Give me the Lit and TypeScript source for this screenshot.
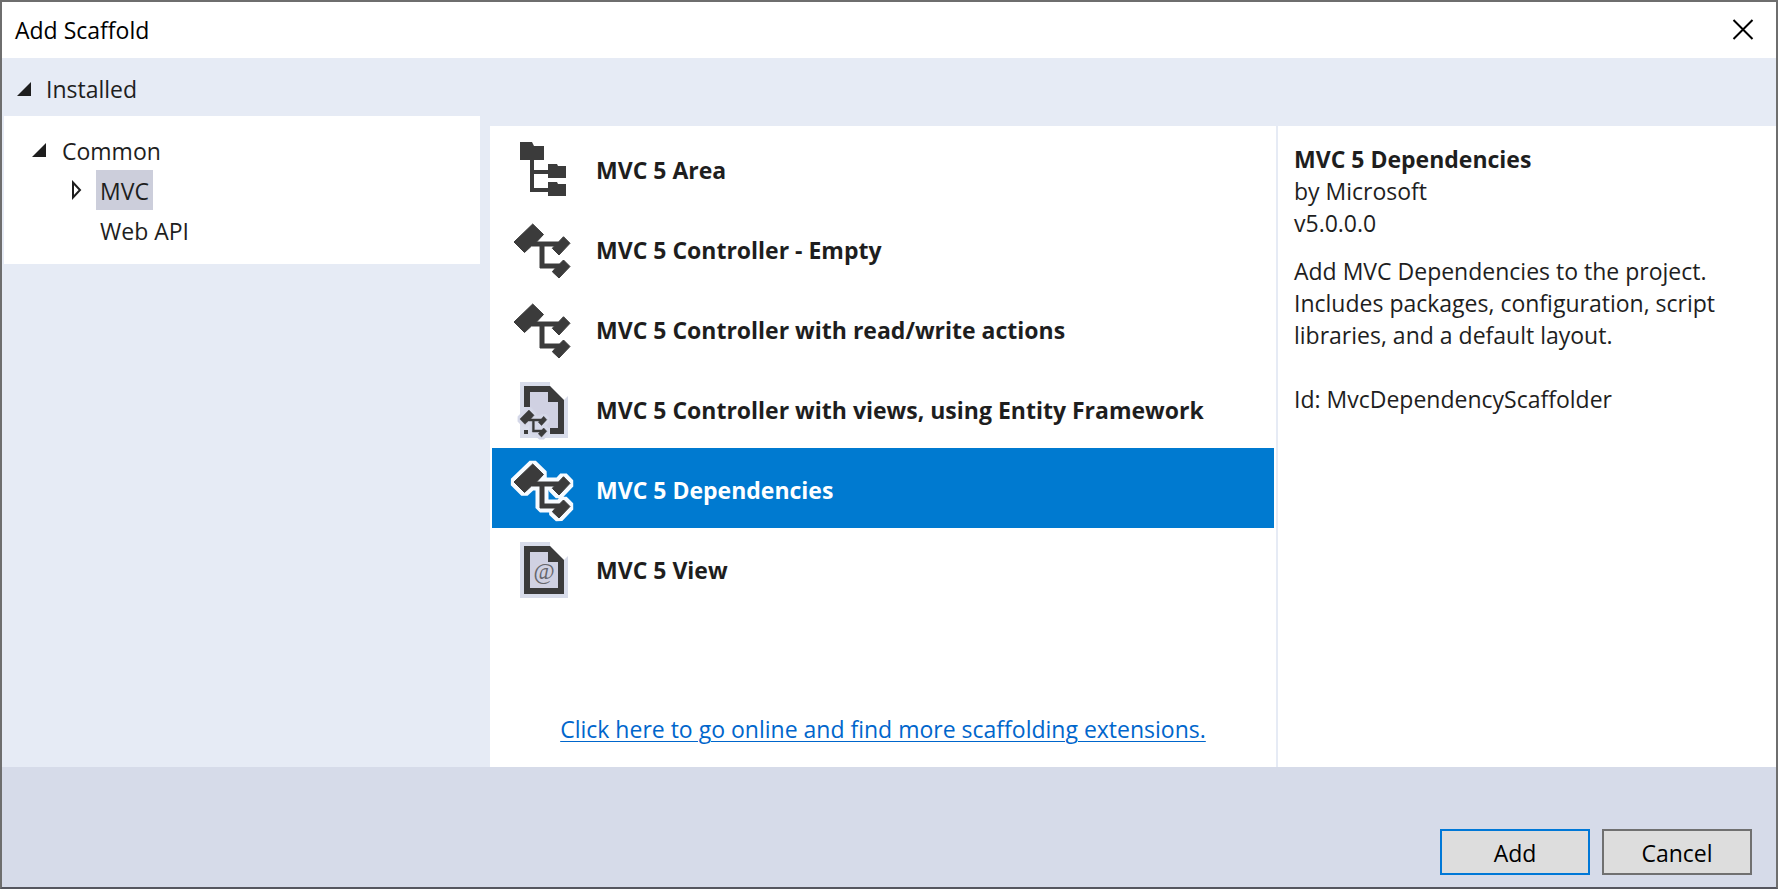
import { LitElement, html, css, svg, nothing } from "lit";
import { customElement, state } from "lit/decorators.js";
import { classMap } from "lit/directives/class-map.js";

type IconName = "area" | "controller" | "entity" | "view";

interface Scaffold {
  name: string;
  icon: IconName;
}

const scaffolds: Scaffold[] = [
  { name: "MVC 5 Area", icon: "area" },
  { name: "MVC 5 Controller - Empty", icon: "controller" },
  { name: "MVC 5 Controller with read/write actions", icon: "controller" },
  { name: "MVC 5 Controller with views, using Entity Framework", icon: "entity" },
  { name: "MVC 5 Dependencies", icon: "controller" },
  { name: "MVC 5 View", icon: "view" },
];

const controllerPath =
  "M4 26L22.7 8L33.5 18.5L26.5 26H48.5L53.5 20.7L60 27.3L49 39L42.3 32.3L44.5 30H34V48H49.5L53.5 44L60 50.5L49 62L42.3 55.7L45.5 52H30V30H21.5L14.5 36.5Z";
const sheetPath = "M10 6H40V10L54 24L58 20V62H10Z";

@customElement("scaffold-icon")
export class ScaffoldIcon extends LitElement {
  static properties = { name: { type: String }, halo: { type: Boolean } };
  declare name: IconName;
  declare halo: boolean;

  static styles = css`
    :host { display: block; width: 64px; height: 64px; }
    svg { display: block; width: 64px; height: 64px; overflow: visible; }
    .ink { fill: #3b3b3b; }
    .bold { stroke: #3b3b3b; stroke-width: 1; }
    .halo { fill: #f7fbff; stroke: #f7fbff; stroke-width: 9; stroke-linejoin: bevel; }
    .sheet { fill: #d8dcea; }
    .paper { fill: #d0d1e2; }
    .soft { fill: #d5d8e8; stroke: #d5d8e8; stroke-width: 14; stroke-linejoin: bevel; }
    .at { fill: #66666c; font: 23px "Liberation Serif", serif; text-anchor: middle; }
  `;

  private shape() {
    switch (this.name) {
      case "area":
        return svg`<path class="ink" d="M10 6H22L24 10H34V24H24V34H38V28H47L48 30H56V42H38V38H24V52H38V46H47L48 48H56V60H38V56H20V24H10Z"/>`;
      case "entity":
        return svg`
          <path class="sheet" d=${sheetPath}/>
          <path class="paper" d="M20 16H38V26H48V52H20Z"/>
          <path class="ink" d="M14 10H40L54 24V58H40V52H48V26H38V16H20V31H14Z"/>
          <g transform="translate(8 30) scale(0.48 0.5)">
            <path class="soft" d=${controllerPath}/>
            <path class="ink bold" d=${controllerPath}/>
          </g>
          <path class="ink" d="M14 54H18V58H14ZM40 52H48V58H40Z"/>`;
      case "view":
        return svg`
          <path class="sheet" d=${sheetPath}/>
          <path class="paper" d="M20 16H38V26H48V52H20Z"/>
          <path class="ink" fill-rule="evenodd" d="M14 10H40L54 24V58H14ZM20 16V52H48V26H38V16Z"/>
          <text class="at" x="34" y="43">@</text>`;
      default:
        return svg`
          ${this.halo ? svg`<path class="halo" d=${controllerPath}/>` : nothing}
          <path class="ink bold" d=${controllerPath}/>`;
    }
  }

  render() {
    return html`<svg viewBox="0 0 64 64" aria-hidden="true">${this.shape()}</svg>`;
  }
}

@customElement("app-root")
export class AppRoot extends LitElement {
  @state() private selected = 4;

  static styles = css`
    :host {
      display: block;
      font: 23px/32px "Segoe UI", "Open Sans", "Noto Sans", sans-serif;
      color: #1e1e1e;
    }
    * { box-sizing: border-box; }
    button { font: inherit; color: inherit; background: none; border: 0; padding: 0; text-align: left; cursor: pointer; }
    ul, h1, h2, p { margin: 0; padding: 0; list-style: none; font-size: inherit; font-weight: inherit; }
    .window {
      min-height: 100vh;
      display: flex;
      flex-direction: column;
      border: 2px solid #6e6e6e;
      border-bottom-color: #55565f;
      background: #e6ebf5;
    }
    .titlebar {
      height: 56px;
      padding: 0 22px 0 13px;
      display: flex;
      align-items: center;
      justify-content: space-between;
      background: #fff;
      color: #000;
    }
    .close svg, .twisty { display: block; }
    .close svg { width: 22px; height: 22px; }
    .content { flex: 1; display: grid; grid-template-columns: 488fr 786fr 500fr; }
    .side { padding: 0 10px 0 2px; }
    .installed { height: 58px; display: flex; align-items: center; gap: 15px; padding: 4px 0 0 13px; }
    .tree { background: #fff; padding: 14px 0; }
    .node { height: 40px; display: flex; align-items: center; }
    .root { padding-left: 28px; gap: 12px; }
    .child { padding-left: 66px; gap: 12px; }
    .twisty { width: 14px; height: 20px; flex: none; }
    .label { height: 40px; padding: 2px 4px 0; }
    .label.current { background: #cccedb; }
    .list { margin-top: 68px; background: #fff; padding: 2px 2px 22px; display: flex; flex-direction: column; }
    .item { width: 100%; height: 80px; padding-left: 18px; display: flex; align-items: center; gap: 22px; font-weight: 700; }
    .item span { padding-top: 4px; }
    .item.selected { background: #007ad0; color: #fff; }
    .more { margin-top: auto; text-align: center; }
    .more a { color: #0066cc; text-underline-offset: 3px; text-decoration-thickness: 1px; }
    .details { margin-top: 68px; background: #fff; border-left: 2px solid #e6ebf5; padding: 17px 16px; }
    .name { font-weight: 700; }
    .about { margin-top: 16px; }
    .ident { margin-top: 32px; }
    .footer { height: 120px; padding: 0 24px 12px; display: flex; justify-content: flex-end; align-items: flex-end; gap: 12px; background: #d6dbe9; color: #000; }
    .push { width: 150px; height: 46px; padding-top: 2px; text-align: center; background: #ddd; border: 2px solid #707070; }
    .push.primary { border-color: #0078d7; }
  `;

  private open() {
    return html`<svg class="twisty" viewBox="0 0 14 20" aria-hidden="true"><path d="M14 3V17H0Z" fill="#1e1e1e" /></svg>`;
  }

  render() {
    return html`
      <div class="window" role="dialog" aria-labelledby="title">
        <header class="titlebar">
          <h1 id="title">Add Scaffold</h1>
          <button class="close" aria-label="Close">
            <svg viewBox="0 0 22 22"><path d="M1.5 1L20.5 20M20.5 1L1.5 20" stroke="#000" stroke-width="2" fill="none" /></svg>
          </button>
        </header>
        <main class="content">
          <nav class="side">
            <button class="installed">${this.open()}<span>Installed</span></button>
            <div class="tree">
              <div class="node root">${this.open()}<button class="label">Common</button></div>
              <div class="node child">
                <svg class="twisty" viewBox="0 0 14 20" aria-hidden="true">
                  <path d="M3 2.5L10 10L3 17.5Z" fill="none" stroke="#1e1e1e" stroke-width="2" />
                </svg>
                <button class="label current">MVC</button>
              </div>
              <div class="node child"><span class="twisty"></span><button class="label">Web API</button></div>
            </div>
          </nav>
          <section class="list">
            <ul>
              ${scaffolds.map(
                (s, i) => html`<li>
                  <button
                    class=${classMap({ item: true, selected: i === this.selected })}
                    aria-pressed=${i === this.selected}
                    @click=${() => (this.selected = i)}
                  >
                    <scaffold-icon .name=${s.icon} .halo=${i === this.selected}></scaffold-icon>
                    <span>${s.name}</span>
                  </button>
                </li>`
              )}
            </ul>
            <p class="more"><a href="#">Click here to go online and find more scaffolding extensions.</a></p>
          </section>
          <aside class="details">
            <h2 class="name">MVC 5 Dependencies</h2>
            <p>by Microsoft</p>
            <p>v5.0.0.0</p>
            <p class="about">Add MVC Dependencies to the project. Includes packages, configuration, script libraries, and a default layout.</p>
            <p class="ident">Id: MvcDependencyScaffolder</p>
          </aside>
        </main>
        <footer class="footer">
          <button class="push primary">Add</button>
          <button class="push">Cancel</button>
        </footer>
      </div>
    `;
  }
}
